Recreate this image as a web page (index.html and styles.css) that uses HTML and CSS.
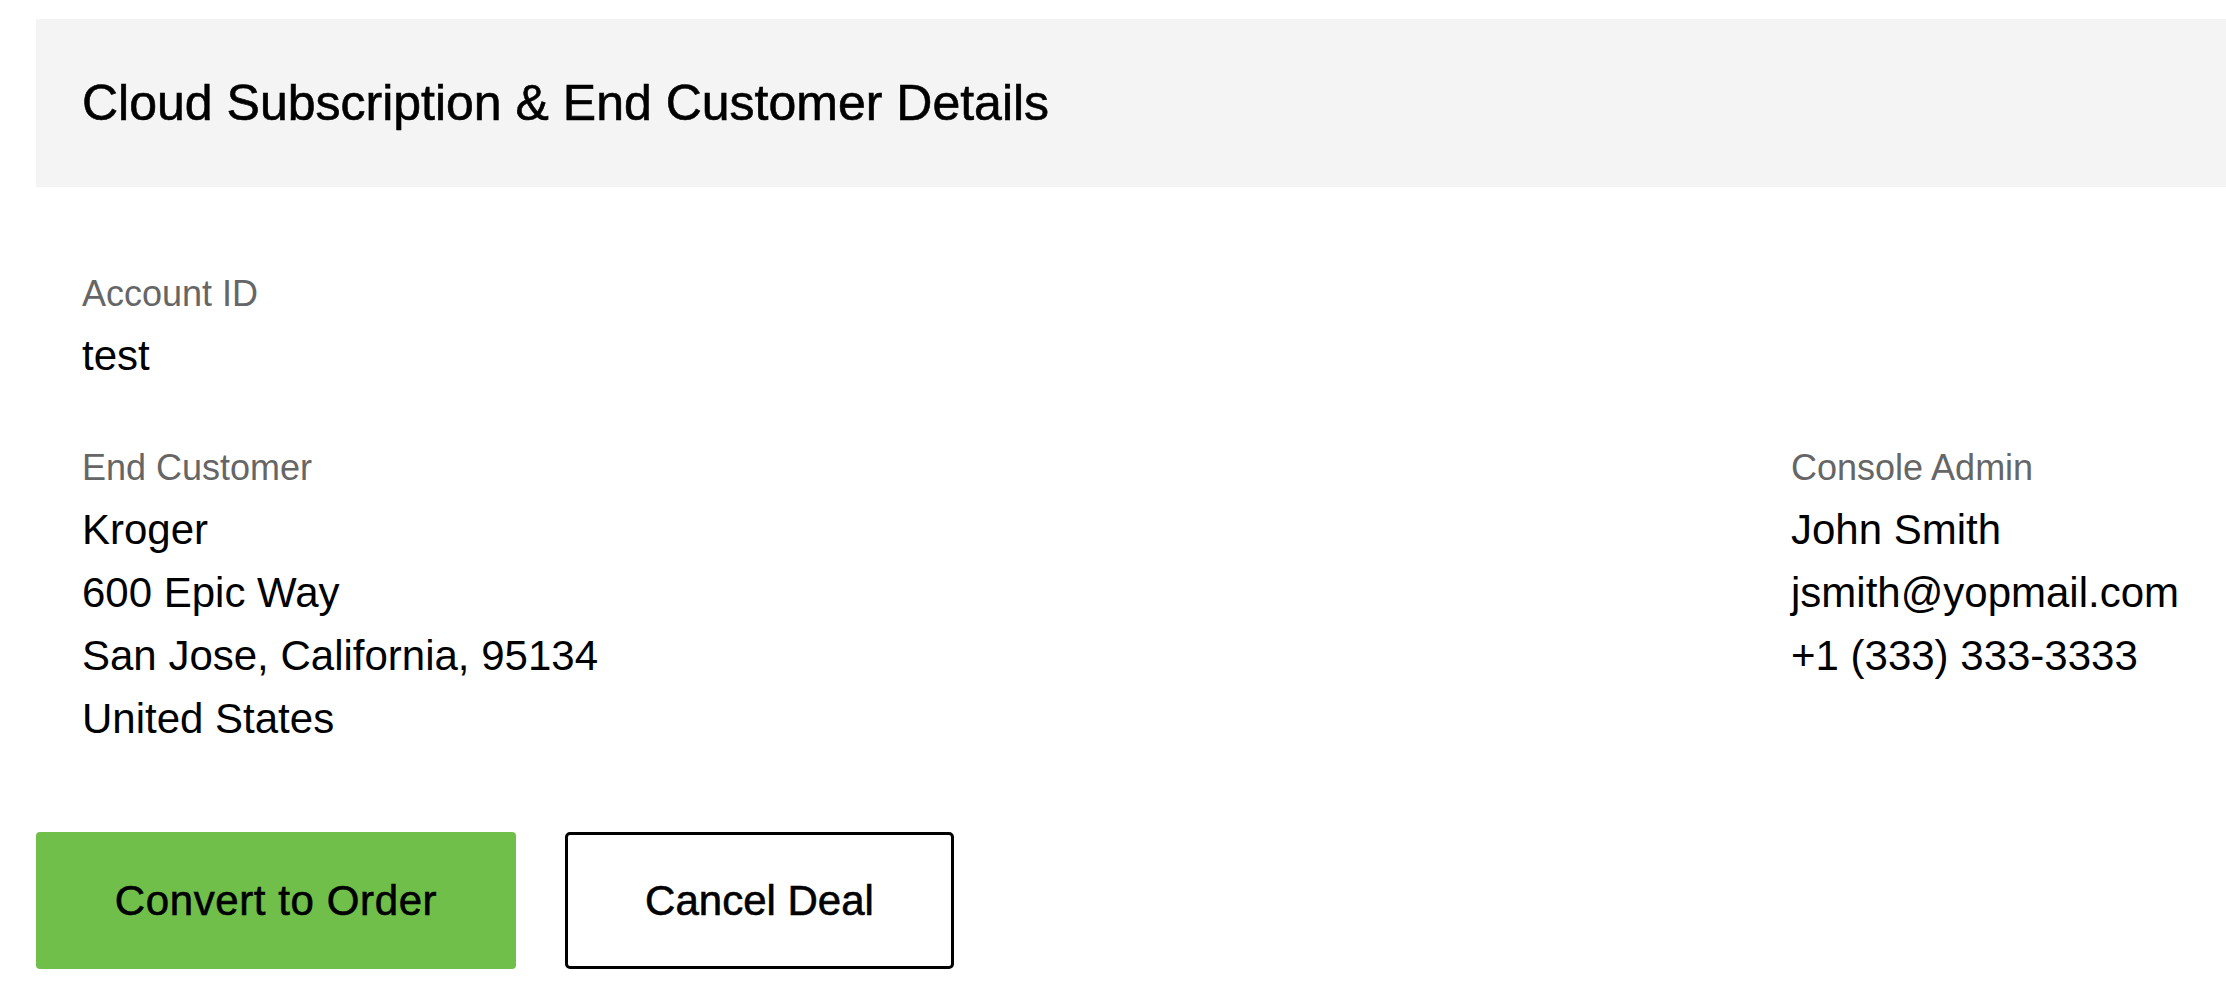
FILE: index.html
```html
<!DOCTYPE html>
<html lang="en">
<head>
<meta charset="utf-8">
<title>Cloud Subscription &amp; End Customer Details</title>
<link rel="stylesheet" href="styles.css">
</head>
<body>
  <main class="page">
    <header class="panel-header">
      <h1 class="panel-title">Cloud Subscription &amp; End Customer Details</h1>
    </header>

    <section class="details">
      <div class="field field-account">
        <div class="field-label">Account ID</div>
        <div class="field-value">test</div>
      </div>

      <div class="field-row">
        <div class="field">
          <div class="field-label">End Customer</div>
          <div class="field-value">Kroger</div>
          <div class="field-value">600 Epic Way</div>
          <div class="field-value">San Jose, California, 95134</div>
          <div class="field-value">United States</div>
        </div>
        <div class="field">
          <div class="field-label">Console Admin</div>
          <div class="field-value">John Smith</div>
          <div class="field-value">jsmith@yopmail.com</div>
          <div class="field-value">+1 (333) 333-3333</div>
        </div>
      </div>
    </section>

    <div class="actions">
      <button class="btn btn-primary" type="button">Convert to Order</button>
      <button class="btn btn-secondary" type="button">Cancel Deal</button>
    </div>
  </main>
</body>
</html>
```

FILE: styles.css
```css
* {
  box-sizing: border-box;
}

html, body {
  margin: 0;
  padding: 0;
  background: #ffffff;
}

body {
  font-family: "Liberation Sans", Arial, Helvetica, sans-serif;
  color: #000000;
  overflow: hidden;
}

.page {
  padding: 19px 0 0 36px;
}

.panel-header {
  height: 168px;
  background: #f4f4f4;
  display: flex;
  align-items: center;
  padding-left: 46px;
}

.panel-title {
  margin: 0;
  font-size: 50px;
  font-weight: 400;
  line-height: 1.2;
  color: #000000;
  -webkit-text-stroke: 0.6px #000000;
}

.details {
  padding: 80px 35px 0 46px;
}

.field-account {
  margin-bottom: 54px;
}

.field-row {
  display: grid;
  grid-template-columns: 1fr 400px;
}

.field-label {
  font-size: 36px;
  line-height: 54px;
  color: #666666;
  margin-bottom: 3px;
}

.field-value {
  font-size: 42px;
  line-height: 63px;
  color: #000000;
  white-space: nowrap;
}

.actions {
  margin-top: 82px;
  display: flex;
  gap: 49px;
}

.btn {
  height: 137px;
  font-family: "Liberation Sans", Arial, Helvetica, sans-serif;
  font-size: 42px;
  font-weight: 400;
  color: #000000;
  -webkit-text-stroke: 0.6px #000000;
  display: flex;
  align-items: center;
  justify-content: center;
  padding: 0;
  cursor: pointer;
}

.btn-primary {
  width: 480px;
  background: #6fbf4a;
  border: none;
  border-radius: 4px;
  letter-spacing: 0.6px;
}

.btn-secondary {
  width: 389px;
  background: #ffffff;
  border: 3px solid #000000;
  border-radius: 5px;
}
```
